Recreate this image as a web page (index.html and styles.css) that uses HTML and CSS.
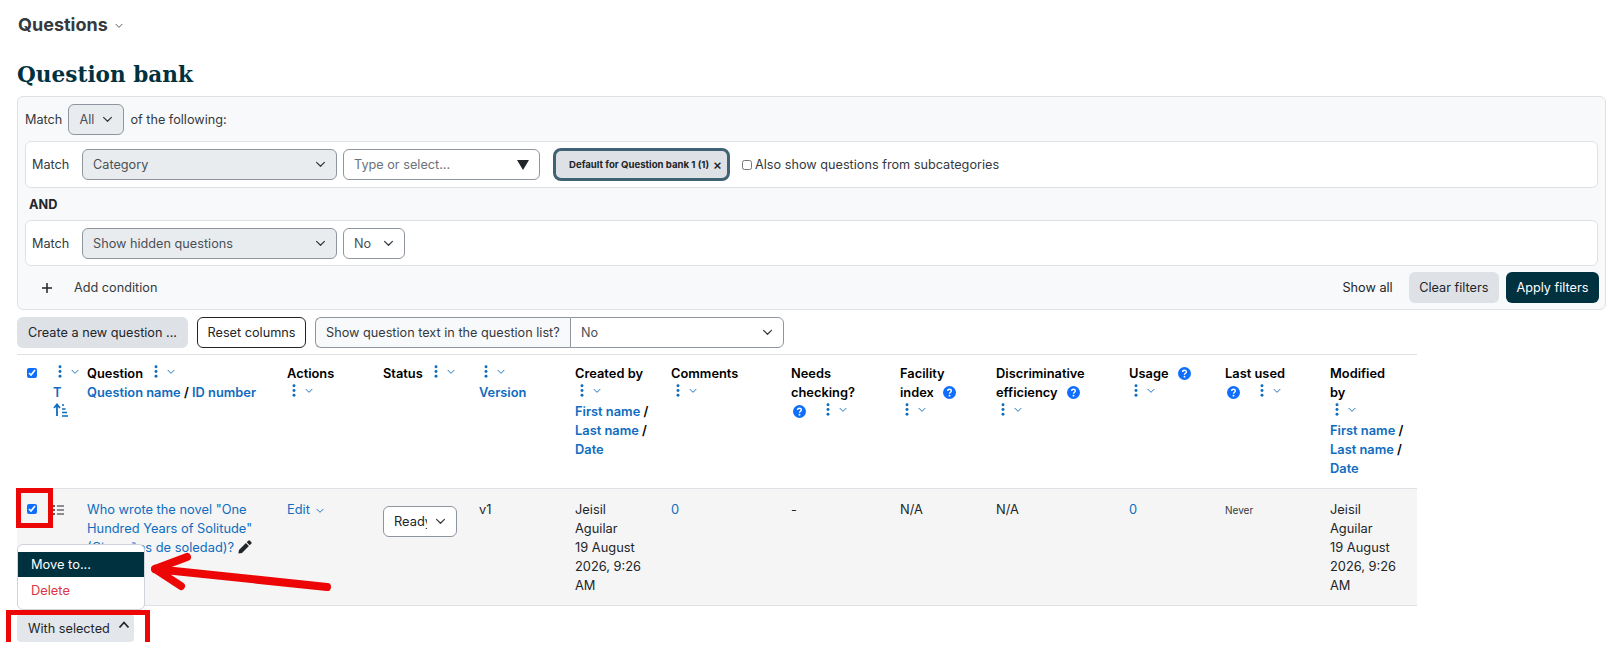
FILE: index.html
```html
<!DOCTYPE html>
<html lang="en">
<head>
  <meta charset="UTF-8">
  <meta name="viewport" content="width=device-width, initial-scale=1.0">
  <title>Question bank</title>
  <link rel="stylesheet" href="styles.css">
</head>
<body>
  <!-- Shared icons -->
  <svg class="icon-defs" aria-hidden="true">
    <symbol id="chev" viewBox="0 0 12 8"><path d="M1.5 1.5 6 6l4.5-4.5" fill="none" stroke="currentColor" stroke-width="1.4" stroke-linecap="round" stroke-linejoin="round"/></symbol>
    <symbol id="kebab" viewBox="0 0 4 14"><circle cx="2" cy="2" r="1.6" fill="currentColor"/><circle cx="2" cy="7" r="1.6" fill="currentColor"/><circle cx="2" cy="12" r="1.6" fill="currentColor"/></symbol>
    <symbol id="help" viewBox="0 0 14 14"><circle cx="7" cy="7" r="7" fill="#0f6efd"/><path d="M5 5.4C5 4.2 5.9 3.5 7 3.5s2 .7 2 1.8c0 1.5-2 1.4-2 3" fill="none" stroke="#fff" stroke-width="1.5"/><circle cx="7" cy="10.4" r="1" fill="#fff"/></symbol>
  </svg>

  <div id="question-page">
    <div class="tertiary-nav">
      <span>Questions</span>
      <svg class="chev-sm nav-chev"><use href="#chev"/></svg>
    </div>

    <h1>Question bank</h1>

    <!-- Filter Section -->
    <div class="filter-box">
      <div class="filter-match">
        <span>Match</span>
        <div class="select select-grey select-all">All <svg class="chev"><use href="#chev"/></svg></div>
        <span>of the following:</span>
      </div>

      <div class="filter-row filter-row-first">
        <span class="row-label">Match</span>
        <div class="select select-grey select-field">Category <svg class="chev"><use href="#chev"/></svg></div>
        <div class="select select-type">
          <span class="placeholder">Type or select...</span>
          <svg class="caret" viewBox="0 0 12 10"><path d="M0 0h12L6 10z" fill="#212529"/></svg>
        </div>
        <div class="chip">Default for Question bank 1 (1) <span class="chip-x">×</span></div>
        <label class="subcats"><input type="checkbox"> Also show questions from subcategories</label>
      </div>

      <div class="filter-and">AND</div>

      <div class="filter-row">
        <span class="row-label">Match</span>
        <div class="select select-grey select-field">Show hidden questions <svg class="chev"><use href="#chev"/></svg></div>
        <div class="select select-no">No <svg class="chev"><use href="#chev"/></svg></div>
      </div>

      <div class="filter-actions">
        <div class="add-condition">
          <svg class="plus" viewBox="0 0 12 12"><path d="M6 1v10M1 6h10" stroke="#212529" stroke-width="1.5"/></svg>
          <span>Add condition</span>
        </div>
        <div class="action-buttons">
          <span class="btn btn-show">Show all</span>
          <span class="btn btn-grey">Clear filters</span>
          <span class="btn btn-dark">Apply filters</span>
        </div>
      </div>
    </div>

    <!-- Toolbar -->
    <div class="toolbar">
      <span class="btn btn-grey btn-create">Create a new question ...</span>
      <span class="btn btn-outline btn-reset">Reset columns</span>
      <div class="text-toggle">
        <span class="toggle-label">Show question text in the question list?</span>
        <div class="select toggle-select">No <svg class="chev"><use href="#chev"/></svg></div>
      </div>
    </div>

    <!-- Questions table -->
    <table class="questions">
      <thead>
        <tr>
          <th><input type="checkbox" checked></th>
          <th><span class="menu menu-first"><svg class="kebab"><use href="#kebab"/></svg><svg class="chev-sm"><use href="#chev"/></svg></span> <a href="#">T</a><br><svg class="sort-icon" viewBox="0 0 15 14"><path d="M4 13V2M1 5l3-3.5L7 5" fill="none" stroke="#0f6cbf" stroke-width="1.8"/><path d="M9 2h2M9 6h3.5M9 9.500h5M9 13h6" stroke="#0f6cbf" stroke-width="1.4"/></svg></th>
          <th>Question <span class="menu"><svg class="kebab"><use href="#kebab"/></svg><svg class="chev-sm"><use href="#chev"/></svg></span><br><a href="#">Question name</a> / <a href="#">ID number</a></th>
          <th>Actions <span class="menu menu-first"><svg class="kebab"><use href="#kebab"/></svg><svg class="chev-sm"><use href="#chev"/></svg></span></th>
          <th>Status <span class="menu"><svg class="kebab"><use href="#kebab"/></svg><svg class="chev-sm"><use href="#chev"/></svg></span></th>
          <th><span class="menu menu-first"><svg class="kebab"><use href="#kebab"/></svg><svg class="chev-sm"><use href="#chev"/></svg></span><br><a href="#">Version</a></th>
          <th>Created by <span class="menu menu-first"><svg class="kebab"><use href="#kebab"/></svg><svg class="chev-sm"><use href="#chev"/></svg></span><br><a href="#">First name</a> / <a href="#">Last name</a> / <a href="#">Date</a></th>
          <th>Comments<br><span class="menu menu-first"><svg class="kebab"><use href="#kebab"/></svg><svg class="chev-sm"><use href="#chev"/></svg></span></th>
          <th>Needs checking? <svg class="help help-wrap"><use href="#help"/></svg> <span class="menu"><svg class="kebab"><use href="#kebab"/></svg><svg class="chev-sm"><use href="#chev"/></svg></span></th>
          <th>Facility index <svg class="help"><use href="#help"/></svg> <span class="menu menu-first"><svg class="kebab"><use href="#kebab"/></svg><svg class="chev-sm"><use href="#chev"/></svg></span></th>
          <th>Discriminative efficiency <svg class="help"><use href="#help"/></svg> <span class="menu menu-first"><svg class="kebab"><use href="#kebab"/></svg><svg class="chev-sm"><use href="#chev"/></svg></span></th>
          <th>Usage <svg class="help"><use href="#help"/></svg> <span class="menu menu-first"><svg class="kebab"><use href="#kebab"/></svg><svg class="chev-sm"><use href="#chev"/></svg></span></th>
          <th>Last used <svg class="help help-wrap"><use href="#help"/></svg> <span class="menu"><svg class="kebab"><use href="#kebab"/></svg><svg class="chev-sm"><use href="#chev"/></svg></span></th>
          <th>Modified<br>by<br><span class="menu menu-first"><svg class="kebab"><use href="#kebab"/></svg><svg class="chev-sm"><use href="#chev"/></svg></span><br><a href="#">First name</a> / <a href="#">Last name</a> / <a href="#">Date</a></th>
        </tr>
      </thead>
      <tbody>
        <tr>
          <td><input type="checkbox" checked></td>
          <td>
            <svg class="type-icon" viewBox="0 0 14 12"><path d="M0 1h2.500M0 6h2.500M0 11h2.500" stroke="#212529" stroke-width="2"/><path d="M5 1h9M5 6h9M5 11h9" stroke="#212529" stroke-width="1.3"/></svg>
          </td>
          <td>
            <a href="#">Who wrote the novel "One Hundred Years of Solitude" (Cien años de soledad)?</a>
            <svg class="pencil" viewBox="0 0 14 14"><path d="M10.200.8a1.300 1.300 0 0 1 1.800 0l1.200 1.200a1.300 1.300 0 0 1 0 1.800L11.700 5.300 8.700 2.300zM7.900 3.100l3 3L4 13 .4 13.600 1 10z" fill="#212529"/></svg>
          </td>
          <td><a href="#">Edit <svg class="chev-sm edit-chev"><use href="#chev"/></svg></a></td>
          <td>
            <div class="select select-status"><span class="status-text">Ready</span><svg class="chev"><use href="#chev"/></svg></div>
          </td>
          <td>v1</td>
          <td>Jeisil Aguilar<br>19 August 2026, 9:26 AM</td>
          <td><a href="#">0</a></td>
          <td>-</td>
          <td>N/A</td>
          <td>N/A</td>
          <td><a href="#">0</a></td>
          <td><small>Never</small></td>
          <td>Jeisil Aguilar<br>19 August 2026, 9:26 AM</td>
        </tr>
      </tbody>
    </table>

    <!-- Bulk actions -->
    <div class="bulk">
      <div class="bulk-menu">
        <div class="bulk-item active">Move to...</div>
        <div class="bulk-item danger">Delete</div>
      </div>
      <span class="bulk-btn">With selected <svg class="chev-up" viewBox="0 0 12 8"><path d="M1.500 6.500 6 1.500l4.500 5" fill="none" stroke="#212529" stroke-width="1.800"/></svg></span>
    </div>

    <!-- Annotations drawn over the screenshot -->
    <div class="mark mark-check"></div>
    <div class="mark mark-bulk"></div>
    <svg class="arrow" viewBox="0 0 190 50">
      <path d="M4 17 176 35M4 17 36 5M4 17 30 34" fill="none" stroke="#ec0606" stroke-width="8" stroke-linecap="round" stroke-linejoin="round"/>
    </svg>
  </div>
</body>
</html>
```

FILE: styles.css
```css
/* General Styles */
body {
  margin: 0;
  font-family: Inter, 'Noto Sans', sans-serif;
  font-size: 12.850px;
  line-height: 19px;
  color: #212529;
  background: #fff;
}

a {
  color: #0f6cbf;
  text-decoration: none;
}

.icon-defs {
  display: none;
}

#question-page {
  position: relative;
  padding: 0 12px 0 17px;
}

/* Icons */
.chev {
  width: 11px;
  height: 7px;
  color: #343a40;
  flex: none;
}

.chev-sm {
  width: 8px;
  height: 6px;
  color: #0f6cbf;
}

.edit-chev {
  margin-left: 2px;
}

.kebab {
  width: 4px;
  height: 13px;
  color: #0f6cbf;
  vertical-align: -2px;
}

.menu {
  display: inline-flex;
  align-items: center;
  gap: 9px;
  margin: 0 2px 0 8px;
}

.menu-first {
  margin-left: 5px;
}

.help {
  width: 13px;
  height: 13px;
  margin: 0 6px;
  vertical-align: -2px;
}

.help-wrap {
  margin-left: 2px;
  margin-right: 9px;
}

/* Header */
.tertiary-nav {
  display: flex;
  align-items: center;
  gap: 7px;
  height: 49px;
  padding-left: 1px;
  font-size: 18px;
  font-weight: 700;
  color: #343a40;
}

.nav-chev {
  color: #495057;
  margin-top: 3px;
}

h1 {
  margin: 11px 0 0;
  height: 36px;
  font-family: 'DejaVu Serif', serif;
  font-size: 21.600px;
  line-height: 30px;
  font-weight: 700;
  color: #00313f;
}

/* Filter box */
.filter-box {
  padding: 7px 7px 6px;
  font-size: 12.700px;
  background: #f8f9fa;
  border: 1px solid #dee2e6;
  border-radius: 6px;
}

.filter-match {
  display: flex;
  align-items: center;
  gap: 6px;
  height: 31px;
  margin-bottom: 6px;
  color: #343a40;
}

.filter-row {
  display: flex;
  align-items: center;
  gap: 6px;
  height: 46px;
  padding: 0 6px;
  box-sizing: border-box;
  background: #fff;
  border: 1px solid #dee2e6;
  border-radius: 6px;
  color: #343a40;
}

.filter-row-first {
  height: 47px;
}

.row-label {
  width: 44px;
}

.filter-and {
  height: 31px;
  padding: 1px 0 0 4px;
  font-weight: 700;
  line-height: 32px;
}

.select {
  display: flex;
  align-items: center;
  justify-content: space-between;
  height: 31px;
  box-sizing: border-box;
  padding: 0 10px;
  color: #495057;
  background: #fff;
  border: 1px solid #8f959e;
  border-radius: 6px;
}

.select-grey {
  background: #e9ecef;
}

.select-all {
  width: 56px;
}

.select-field {
  width: 255px;
}

.select-type {
  width: 197px;
}

.placeholder {
  color: #6a737b;
}

.caret {
  width: 12px;
  height: 10px;
}

.select-no {
  width: 62px;
}

.chip {
  display: flex;
  align-items: center;
  justify-content: space-between;
  width: 177px;
  height: 33px;
  box-sizing: border-box;
  margin-left: 7px;
  padding: 0 5px 0 13px;
  font-size: 9.600px;
  font-weight: 700;
  white-space: nowrap;
  color: #212529;
  background: #dee2e6;
  border: 3px solid #3f6375;
  border-radius: 8px;
}

.chip-x {
  font-size: 14px;
  font-weight: 500;
}

.subcats {
  display: flex;
  align-items: center;
  gap: 3px;
  margin-left: 6px;
}

.subcats input {
  width: 10px;
  height: 10px;
  margin: 0;
}

.filter-actions {
  display: flex;
  justify-content: space-between;
  align-items: center;
  margin: 6px -1px 0 0;
  height: 31px;
}

.add-condition {
  display: flex;
  align-items: center;
  gap: 21px;
  padding-left: 16px;
  color: #343a40;
}

.plus {
  width: 12px;
  height: 12px;
}

.action-buttons {
  display: flex;
  gap: 7px;
}

/* Buttons */
.btn {
  display: inline-flex;
  align-items: center;
  justify-content: center;
  height: 31px;
  box-sizing: border-box;
  padding: 0 10.500px;
  white-space: nowrap;
  border-radius: 6px;
}

.btn-show {
  padding: 0 9px;
}

.btn-grey {
  background: #dee2e6;
}

.btn-dark {
  color: #fff;
  background: #00313f;
}

.btn-outline {
  background: #fff;
  border: 1px solid #212529;
}

.toolbar {
  display: flex;
  gap: 9px;
  margin-top: 7px;
  height: 31px;
  font-size: 12.700px;
}

.btn-create {
  width: 171px;
}

.btn-reset {
  width: 109px;
}

.text-toggle {
  display: flex;
}

.toggle-label {
  display: flex;
  align-items: center;
  width: 255px;
  box-sizing: border-box;
  padding: 0 10px;
  white-space: nowrap;
  color: #343a40;
  background: #f8f9fa;
  border: 1px solid #8f959e;
  border-right: none;
  border-radius: 6px 0 0 6px;
}

.toggle-select {
  width: 214px;
  border-radius: 0 6px 6px 0;
}

/* Questions table */
.questions {
  width: 1400px;
  margin-top: 6px;
  table-layout: fixed;
  border-collapse: collapse;
}

.questions th,
.questions td {
  padding: 10px;
  vertical-align: top;
  text-align: left;
  overflow-wrap: break-word;
}

.questions th {
  padding-top: 9px;
  color: #000;
  font-weight: 600;
  border-top: 1px solid #dee2e6;
  border-bottom: 1px solid #dee2e6;
}

.questions th a {
  font-weight: 600;
}

.questions td {
  padding-top: 11px;
  background: #f5f5f5;
  border-bottom: 1px solid #dee2e6;
}

.questions input {
  width: 10px;
  height: 10px;
  margin: 3px 0 0;
  accent-color: #0f6efd;
}

.questions th:nth-child(1) { width: 6px; }
.questions th:nth-child(2) { width: 24px; padding-right: 0; }
.questions th:nth-child(3) { width: 180px; }
.questions th:nth-child(4) { width: 76px; }
.questions th:nth-child(5) { width: 76px; }
.questions th:nth-child(6) { width: 76px; }
.questions th:nth-child(7) { width: 76px; }
.questions th:nth-child(8) { width: 100px; }
.questions th:nth-child(9) { width: 89px; }
.questions th:nth-child(10) { width: 76px; }
.questions th:nth-child(11) { width: 113px; }
.questions th:nth-child(12) { width: 76px; }
.questions th:nth-child(13) { width: 85px; }
.questions th:nth-child(14) { width: 77px; }

.sort-icon {
  width: 15px;
  height: 14px;
  margin-top: 1px;
}

.type-icon {
  width: 11px;
  height: 10px;
  margin-top: 5px;
}

.pencil {
  width: 14px;
  height: 14px;
  vertical-align: -2px;
}

.select-status {
  width: 74px;
  margin-top: 6px;
  margin-bottom: 0;
}

.status-text {
  width: 33px;
  overflow: hidden;
  white-space: nowrap;
  color: #212529;
}

.questions small {
  font-size: 10px;
  color: #343a40;
}

/* Bulk actions */
.bulk {
  position: relative;
  margin-top: 8px;
}

.bulk-btn {
  display: inline-flex;
  align-items: center;
  gap: 8px;
  width: 117px;
  height: 28px;
  box-sizing: border-box;
  padding-left: 11px;
  font-size: 12.700px;
  background: #e3e6ea;
  border-radius: 4px;
}

.chev-up {
  width: 12px;
  height: 8px;
  margin-bottom: 6px;
}

.bulk-menu {
  position: absolute;
  left: 0;
  bottom: 32px;
  width: 128px;
  height: 66px;
  box-sizing: border-box;
  padding-top: 7px;
  background: #fff;
  border: 1px solid #ced4da;
  border-radius: 6px;
}

.bulk-item {
  height: 25px;
  padding-left: 13px;
  line-height: 25px;
}

.bulk-item.active {
  color: #fff;
  background: #00313f;
}

.bulk-item.danger {
  margin-top: 1px;
  color: #dc3545;
}

/* Annotations */
.mark {
  position: absolute;
  box-sizing: border-box;
  border: 5px solid #ec0606;
}

.mark-check {
  left: 16px;
  top: 488px;
  width: 37px;
  height: 40px;
}

.mark-bulk {
  left: 6px;
  top: 610px;
  width: 144px;
  height: 37px;
}

.arrow {
  position: absolute;
  left: 151px;
  top: 552px;
  width: 190px;
  height: 50px;
}
```
